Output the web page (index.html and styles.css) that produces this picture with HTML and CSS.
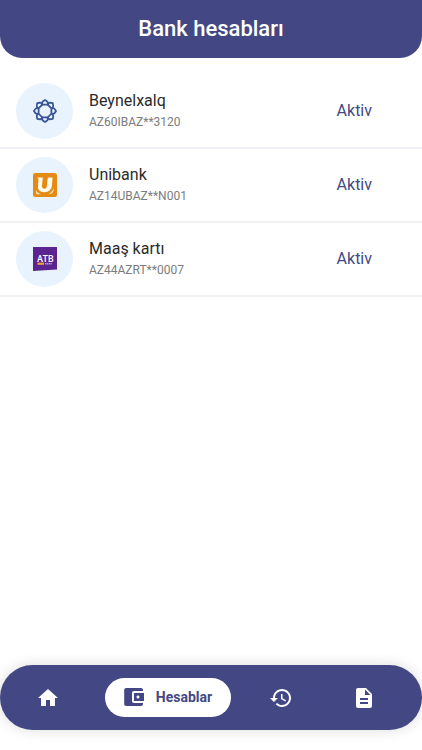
FILE: index.html
```html
<!DOCTYPE html>
<html lang="az">
<head>
<meta charset="utf-8">
<meta name="viewport" content="width=device-width, initial-scale=1">
<title>Bank hesabları</title>
<link rel="stylesheet" href="styles.css">
</head>
<body>
<header class="header"><h1 class="title">Bank hesabları</h1></header>
<main class="main">
  <ul class="accounts">
    <li class="account">
      <span class="avatar">
        <svg class="logo" viewBox="-12 -12 24 24" aria-hidden="true">
          <g fill="none" stroke="#3b5499" stroke-width="1.8" stroke-linejoin="round">
            <path id="knot" d="M0-11C3-9.400 3.400-8 2.600-6.600C3.400-5.600 5.600-3.400 6.600-2.600C8-3.400 9.400-3 11 0C9.400 3 8 3.400 6.600 2.600C5.600 3.400 3.400 5.600 2.600 6.600C3.400 8 3 9.400 0 11C-3 9.400-3.400 8-2.600 6.600C-3.400 5.600-5.600 3.400-6.600 2.600C-8 3.400-9.400 3-11 0C-9.400-3-8-3.400-6.600-2.600C-5.600-3.400-3.400-5.600-2.600-6.600C-3.400-8-3-9.400 0-11Z"/>
            <use href="#knot" transform="rotate(45)"/>
          </g>
        </svg>
      </span>
      <div class="details">
        <h2 class="name">Beynelxalq</h2>
        <p class="number">AZ60IBAZ**3120</p>
      </div>
      <span class="status">Aktiv</span>
    </li>
    <li class="account">
      <span class="avatar">
        <svg class="logo" viewBox="0 0 24 24" aria-hidden="true">
          <rect width="24" height="24" rx="2.5" fill="#e58a12"/>
          <path d="M4 4.400H9.800L9 12.600C8.800 14.800 9.700 15.800 11.300 15.800C13 15.800 13.800 14.800 14 12.600L14.600 6C14.700 4.800 15.200 4.400 16.200 4.400H19.600L18.900 12.800C18.500 17 15.600 19.200 11.300 19.200C7 19.200 4.600 17 5 12.800L5.500 6.800C5.600 5.800 5 5 4 4.400Z" fill="#fffaf0"/>
          <path d="M3 17C4.200 19.400 5.800 20.600 8.400 21.200H4.500C3.500 21.200 3 20.700 3 19.700Z" fill="#fbe2bb"/>
          <path d="M20.600 15V17.600C20.200 20 18.400 21.200 15.400 21.200C18 19.800 19.800 17.800 20.600 15Z" fill="#fbe2bb"/>
        </svg>
      </span>
      <div class="details">
        <h2 class="name">Unibank</h2>
        <p class="number">AZ14UBAZ**N001</p>
      </div>
      <span class="status">Aktiv</span>
    </li>
    <li class="account">
      <span class="avatar">
        <svg class="logo" viewBox="0 0 24 24" aria-hidden="true">
          <path d="M0 0H24V22.500L0 24Z" fill="#5b2490"/>
          <text class="atb" x="4" y="15">ATB</text>
          <path d="M4.500 15.600H11V17.800H4.500Z" fill="#f0a23c"/>
          <path d="M12 16.800H19" stroke="#b797d0" stroke-width="1.5" stroke-dasharray="1.4 .4"/>
        </svg>
      </span>
      <div class="details">
        <h2 class="name">Maaş kartı</h2>
        <p class="number">AZ44AZRT**0007</p>
      </div>
      <span class="status">Aktiv</span>
    </li>
  </ul>
</main>
<nav class="tabs" aria-label="Menyu">
  <button class="tab" type="button" aria-label="Əsas">
    <svg class="icon" viewBox="0 0 24 24"><path d="M10 20v-6h4v6h5v-8h3L12 3 2 12h3v8z"/></svg>
  </button>
  <button class="tab tab-active" type="button" aria-current="page">
    <svg class="icon" viewBox="0 0 24 24"><path d="M21 18v1c0 1.100-.9 2-2 2H4.200C3 21 2.200 20.100 2.200 19V5c0-1.100.8-2 2-2H19c1.100 0 2 .9 2 2v1h-9c-1.110 0-2 .9-2 2v8c0 1.100.89 2 2 2h9zm-9-2h10V8H12v8zm4-2.500c-.83 0-1.500-.67-1.500-1.500s.67-1.500 1.500-1.500 1.500.67 1.500 1.500-.67 1.500-1.500 1.500z"/></svg>
    <span>Hesablar</span>
  </button>
  <button class="tab" type="button" aria-label="Tarixçə">
    <svg class="icon" viewBox="0 0 24 24"><path d="M13 3c-4.970 0-9 4.030-9 9H1l3.890 3.890.07.14L9 12H6c0-3.870 3.130-7 7-7s7 3.130 7 7-3.130 7-7 7c-1.930 0-3.680-.79-4.940-2.060l-1.420 1.420C8.270 19.990 10.510 21 13 21c4.970 0 9-4.030 9-9s-4.030-9-9-9zm-1 5v5l4.280 2.540.72-1.210-3.500-2.080V8H12z"/></svg>
  </button>
  <button class="tab" type="button" aria-label="Sənədlər">
    <svg class="icon" viewBox="0 0 24 24"><path d="M14 2H6c-1.100 0-1.990.9-1.990 2L4 20c0 1.100.89 2 1.990 2H18c1.100 0 2-.9 2-2V8l-6-6zm2 16H8v-2h8v2zm0-4H8v-2h8v2zm-3-5V3.500L18.500 9H13z"/></svg>
  </button>
</nav>
</body>
</html>
```
FILE: styles.css
```css
* {
  box-sizing: border-box;
  margin: 0;
  padding: 0;
}

body {
  display: flex;
  flex-direction: column;
  min-height: 100vh;
  background: #fff;
  font-family: Roboto, sans-serif;
}

.header {
  padding: 14px 16px;
  border-radius: 0 0 22px 22px;
  background: #434884;
  color: #fff;
  text-align: center;
}

.title {
  font-size: 22px;
  line-height: 30px;
  font-weight: 500;
}

.main {
  flex: 1;
  padding-top: 17px;
}

.accounts {
  list-style: none;
}

.account {
  display: flex;
  align-items: center;
  gap: 16px;
  padding: 8px 50px 8px 16px;
  border-bottom: 2px solid #f1f1f5;
}

.avatar {
  display: flex;
  align-items: center;
  justify-content: center;
  width: 57px;
  height: 56px;
  border-radius: 50%;
  background: #e8f3fe;
}

.logo {
  width: 24px;
  height: 24px;
}

.atb {
  fill: #fff;
  font-size: 9px;
  font-weight: 500;
}

.details {
  flex: 1;
}

.name {
  color: #2b2b2b;
  font-size: 16px;
  line-height: 22px;
  font-weight: 400;
}

.number {
  color: #7c7c7c;
  font-size: 12px;
  line-height: 20px;
}

.status {
  color: #434884;
  font-size: 16px;
  line-height: 22px;
}

.tabs {
  display: grid;
  grid-template-columns: 96fr 144fr 81fr 85fr;
  align-items: center;
  justify-items: center;
  margin-bottom: 20px;
  padding: 13px 16px 13px 0;
  border-radius: 33px;
  background: #434884;
  box-shadow: 0 0 14px rgba(0, 0, 0, 0.14);
}

.tab {
  display: flex;
  align-items: center;
  gap: 10px;
  border: 0;
  background: none;
  color: #fff;
  font-family: inherit;
  font-size: 14px;
  line-height: 20px;
  font-weight: 700;
}

.tab-active {
  padding: 7px 19px 8px 17px;
  border-radius: 20px;
  background: #fff;
  color: #434884;
}

.icon {
  width: 24px;
  height: 24px;
  fill: currentColor;
}
```
